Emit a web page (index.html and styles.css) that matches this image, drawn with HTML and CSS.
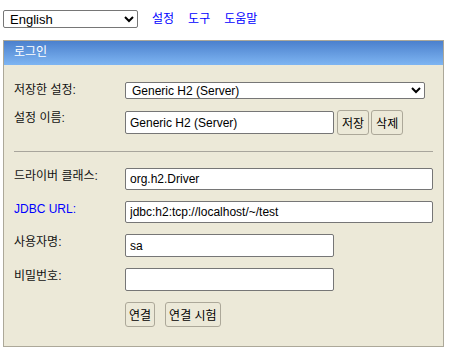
FILE: index.html
```html
<!DOCTYPE html>
<html lang="ko">
<head>
    <meta charset="UTF-8">
    <meta name="viewport" content="width=device-width, initial-scale=1.0">
    <title>H2 Console</title>
    <link rel="stylesheet" href="styles.css">
</head>
<body>
    <div class="toolbar">
        <select class="lang">
            <option>English</option>
        </select>
        <a href="#">설정</a>
        <a href="#">도구</a>
        <a href="#">도움말</a>
    </div>

    <form class="login">
        <div class="login-head">로그인</div>
        <div class="login-body">
            <label class="label">저장한 설정:</label>
            <div class="field">
                <select class="setting">
                    <option>Generic H2 (Server)</option>
                </select>
            </div>

            <label class="label">설정 이름:</label>
            <div class="field">
                <input class="text short" type="text" value="Generic H2 (Server)">
                <button class="button save" type="button">저장</button>
                <button class="button" type="button">삭제</button>
            </div>

            <hr class="sep">

            <label class="label">드라이버 클래스:</label>
            <div class="field">
                <input class="text wide" type="text" value="org.h2.Driver">
            </div>

            <label class="label"><a href="#">JDBC URL:</a></label>
            <div class="field">
                <input class="text wide" type="text" value="jdbc:h2:tcp://localhost/~/test">
            </div>

            <label class="label">사용자명:</label>
            <div class="field">
                <input class="text short" type="text" value="sa">
            </div>

            <label class="label">비밀번호:</label>
            <div class="field">
                <input class="text short" type="password" value="">
            </div>

            <div></div>
            <div class="field actions">
                <button class="button" type="button">연결</button>
                <button class="button" type="button">연결 시험</button>
            </div>
        </div>
    </form>
</body>
</html>
```

FILE: styles.css
```css
body {
    margin: 0;
    padding: 10px 3px;
    background-color: #fff;
    color: #000;
    font: 12px "Liberation Sans", "Noto Sans CJK KR", sans-serif;
}

a {
    color: #0000ff;
    text-decoration: none;
}

.toolbar {
    display: flex;
    align-items: center;
    height: 18px;
}

.toolbar a {
    margin-left: 14px;
    line-height: 18px;
}

.lang {
    width: 135px;
    height: 18px;
    margin: 0;
    padding: 0 0 0 2px;
    border: 1px solid #767676;
    border-radius: 2px;
    background-color: #fff;
    font: 13px "Liberation Sans", sans-serif;
    color: #000;
}

.login {
    margin: 12px 0 0;
    width: 441px;
    box-sizing: border-box;
    border: 1px solid #aca899;
    background-color: #ece9d8;
}

.login-head {
    height: 24px;
    line-height: 23px;
    padding-left: 10px;
    color: #fff;
    background: linear-gradient(#4b80cd, #7eb5f2);
}

.login-body {
    display: grid;
    grid-template-columns: 111px 1fr;
    row-gap: 11px;
    align-items: start;
    padding: 17px 10px 19px;
}

.label {
    line-height: 16px;
    color: #111;
}

.field {
    display: flex;
    align-items: center;
}

.setting {
    width: 300px;
    height: 17px;
    margin: 0;
    padding: 0 0 0 2px;
    border: 1px solid #767676;
    border-radius: 2px;
    background-color: #fff;
    font: 12px "Liberation Sans", sans-serif;
    color: #000;
}

.text {
    height: 22px;
    box-sizing: border-box;
    margin: 0;
    padding: 1px 4px;
    border: 1px solid #767676;
    border-radius: 2px;
    background-color: #fff;
    font: 12px "Liberation Sans", sans-serif;
    color: #000;
}

.short {
    width: 209px;
    height: 23px;
}

.wide {
    width: 100%;
}

.button {
    height: 25px;
    margin: 0 0 0 2px;
    padding: 0 4px;
    border: 1px solid #aca899;
    border-radius: 3px;
    background-color: #ece9d8;
    font: 12px "Noto Sans CJK KR", sans-serif;
    color: #000;
}

.save {
    margin-left: 3px;
}

.actions {
    gap: 10px;
}

.actions .button {
    margin: 0;
    padding: 0 3px;
}

.sep {
    grid-column: 1 / -1;
    height: 0;
    margin: 5px 0 5px;
    border: 0;
    border-top: 1px solid #a8a59c;
}
```
